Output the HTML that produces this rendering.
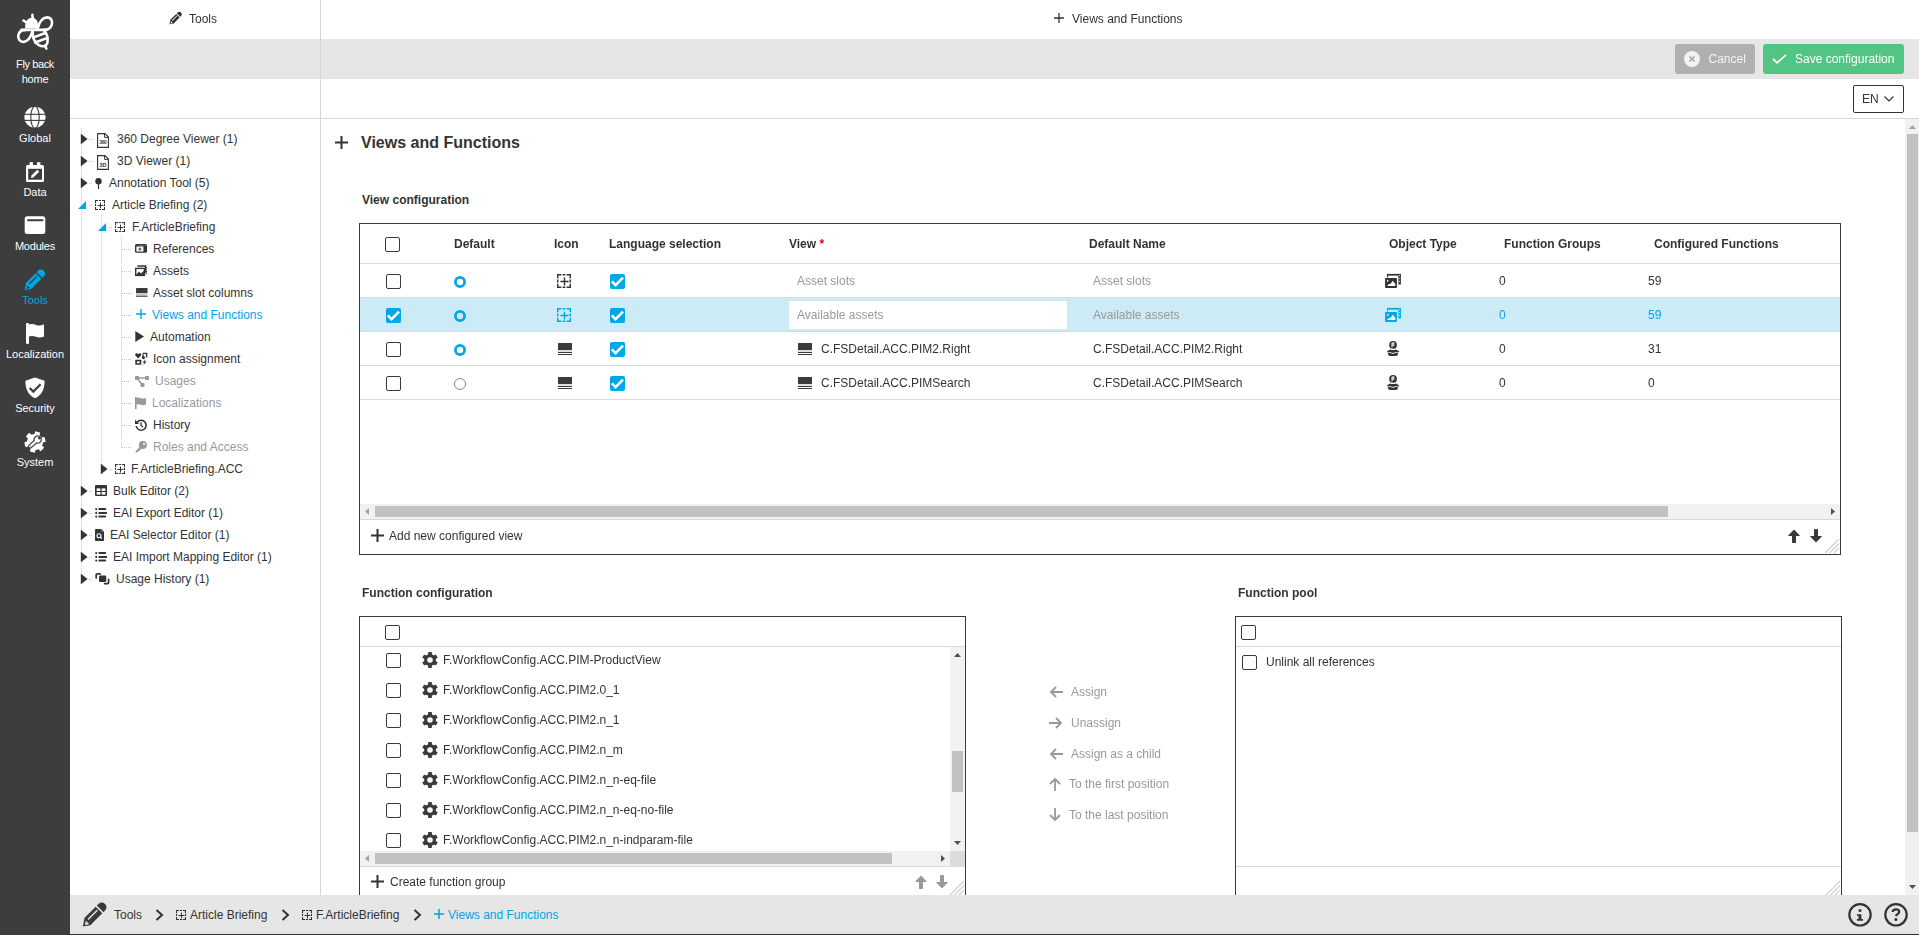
<!DOCTYPE html>
<html><head><meta charset="utf-8">
<style>
*{box-sizing:border-box;margin:0;padding:0}
html,body{width:1919px;height:935px;overflow:hidden;background:#fff;font-family:"Liberation Sans",sans-serif;font-size:12px;color:#333}
.a{position:absolute}
.t{position:absolute;white-space:nowrap;line-height:14px;font-size:12px}
svg{position:absolute;overflow:visible}
.si{position:absolute;left:0;width:70px;text-align:center;color:#fff;font-size:11px;line-height:14px;white-space:nowrap}
.blue{color:#00a5e3}
.gray{color:#999}
.cb{position:absolute;width:15px;height:15px;border:1.5px solid #3a3a3a;border-radius:2px;background:#fff}
.hd{position:absolute;font-weight:bold;white-space:nowrap;line-height:14px;font-size:12px}
.hl{position:absolute;height:1px;background:#d9d9d9}
.lay{position:absolute;left:0;top:0;width:1919px;height:935px;will-change:transform}
</style></head><body>
<div class="a" style="left:0;top:0;width:70px;height:935px;background:#3d3d3d"></div>
<svg style="left:10px;top:5px" width="50" height="50" viewBox="0 0 935 935">
 <g fill="none" stroke="#fff" stroke-width="48" stroke-linecap="round" stroke-linejoin="round">
  <line x1="250" y1="290" x2="305" y2="325"/>
  <line x1="418" y1="185" x2="425" y2="250"/>
  <path d="M215 465 L690 465"/>
  <path d="M515 450 C545 330 600 235 690 232 C775 232 800 310 780 370 C760 430 710 462 650 465"/>
  <path d="M425 480 C395 580 345 680 260 690 C180 698 148 630 155 570 C165 500 220 465 290 465"/>
  <path d="M425 485 C420 600 450 700 540 750 C610 790 690 770 700 700 C715 620 690 540 640 485"/>
  <line x1="430" y1="610" x2="660" y2="525"/>
  <line x1="470" y1="700" x2="690" y2="620"/>
  <line x1="660" y1="770" x2="680" y2="815"/>
 </g>
 <path d="M285 440 C270 320 330 240 410 238 C490 238 540 310 520 440 Z" fill="#fff"/>
</svg>
<div class="si" style="top:57px;letter-spacing:-0.4px">Fly back</div>
<div class="si" style="top:72px;letter-spacing:-0.2px">home</div>
<svg style="left:24px;top:106px" width="22" height="22" viewBox="0 0 22 22">
 <circle cx="11" cy="11.3" r="10.6" fill="#fff"/>
 <g fill="none" stroke="#3d3d3d" stroke-width="1.1">
  <line x1="0" y1="8.3" x2="22" y2="8.3"/><line x1="0" y1="14.4" x2="22" y2="14.4"/>
  <ellipse cx="11" cy="11.3" rx="4.2" ry="11"/>
 </g>
</svg>
<div class="si" style="top:131px">Global</div>
<svg style="left:26px;top:161px" width="18" height="21" viewBox="0 0 18 21">
 <rect x="0" y="4" width="18" height="17" rx="1.5" fill="#fff"/>
 <rect x="3.6" y="1.2" width="3.4" height="3.4" fill="#fff"/><rect x="11" y="1.2" width="3.4" height="3.4" fill="#fff"/>
 <rect x="2.2" y="7.8" width="13.8" height="10.9" fill="#3d3d3d"/>
 <path d="M5 17 L5.5 14.6 L11.3 8.8 L13.2 10.7 L7.4 16.5 Z" fill="#fff"/>
</svg>
<div class="si" style="top:185px">Data</div>
<svg style="left:24px;top:216px" width="22" height="19" viewBox="0 0 22 19">
 <rect x="0.7" y="0.3" width="20.6" height="17.7" rx="2.5" fill="#fff"/>
 <line x1="4" y1="4.3" x2="18.5" y2="4.3" stroke="#3d3d3d" stroke-width="2" stroke-linecap="round"/>
</svg>
<div class="si" style="top:239px;letter-spacing:-0.2px">Modules</div>
<svg style="left:23.6px;top:270px" width="20.5" height="20.5" viewBox="0 0 24 24"><g transform="translate(12 12) rotate(-45) scale(1.14)"><path d="M-14 0.2 L-7.6 -4.1 H6.2 V4.1 H-8.6 Z" fill="#00a5e3"/><path d="M7.6 -4.1 H9.6 A4.1 4.1 0 0 1 9.6 4.1 H7.6 Z" fill="#00a5e3"/><rect x="-6.5" y="-1.6" width="11.5" height="1.3" fill="#3d3d3d"/><path d="M-12 0.6 L-8.6 -1.4 L-8.6 2.6 Z" fill="#3d3d3d"/></g></svg>
<div class="si blue" style="top:293px">Tools</div>
<svg style="left:26px;top:323px" width="18" height="21" viewBox="0 0 18 21">
 <rect x="0" y="0" width="3" height="21" rx="1.2" fill="#fff"/>
 <path d="M2.5 1.5 C5 0.5 8 1 10 2 C12 3 15 2.5 18 1.3 L18 13.5 C15 14.7 12 14.8 10 13.8 C8 12.8 5 12.5 2.5 13.5 Z" fill="#fff"/>
</svg>
<div class="si" style="top:347px">Localization</div>
<svg style="left:25px;top:377px" width="20" height="22" viewBox="0 0 20 22">
 <path d="M10 0.5 L19.6 3.8 C19.6 12 17 18 10 21.3 C3 18 0.4 12 0.4 3.8 Z" fill="#fff"/>
 <path d="M4.6 11 L8.3 14.6 L15.6 7.3" fill="none" stroke="#3d3d3d" stroke-width="2.2"/>
</svg>
<div class="si" style="top:401px">Security</div>
<svg style="left:24px;top:431px" width="22" height="22" viewBox="0 0 22 22">
 <g transform="translate(11 11) rotate(15)" fill="#fff"><circle r="8"/><rect x="-2.6" y="-10.5" width="5.2" height="4" rx="0.9" transform="rotate(0)"/><rect x="-2.6" y="-10.5" width="5.2" height="4" rx="0.9" transform="rotate(60)"/><rect x="-2.6" y="-10.5" width="5.2" height="4" rx="0.9" transform="rotate(120)"/><rect x="-2.6" y="-10.5" width="5.2" height="4" rx="0.9" transform="rotate(180)"/><rect x="-2.6" y="-10.5" width="5.2" height="4" rx="0.9" transform="rotate(240)"/><rect x="-2.6" y="-10.5" width="5.2" height="4" rx="0.9" transform="rotate(300)"/></g>
 <g transform="translate(11 11) rotate(-42)">
  <g fill="none" stroke="#3d3d3d" stroke-width="2.4"><rect x="-7.6" y="-1.1" width="9.5" height="2.2" rx="1.1"/><circle cx="3.6" cy="0" r="2.9"/></g>
  <g fill="#fff"><rect x="-7.6" y="-1.1" width="9.5" height="2.2" rx="1.1"/><circle cx="3.6" cy="0" r="2.9"/></g>
  <rect x="4.6" y="-1.2" width="3" height="2.4" fill="#3d3d3d"/>
  <circle cx="-6" cy="0" r="0.5" fill="#3d3d3d"/>
 </g>
</svg>
<div class="si" style="top:455px">System</div>
<!-- ============ TREE ============ -->
<div class="a" style="left:81px;top:128px;width:1px;height:452px;background-image:linear-gradient(180deg,#cfcfcf 1px,transparent 1px);background-size:1px 2px"></div>
<div class="a" style="left:101px;top:215px;width:1px;height:255px;background-image:linear-gradient(180deg,#cfcfcf 1px,transparent 1px);background-size:1px 2px"></div>
<div class="a" style="left:121px;top:237px;width:1px;height:211px;background-image:linear-gradient(180deg,#cfcfcf 1px,transparent 1px);background-size:1px 2px"></div>
<svg style="left:81.2px;top:133.8px" width="7" height="10" viewBox="0 0 7 10"><path d="M0 0L6.3 5L0 10Z" fill="#333" stroke="#333" stroke-width="0.4" stroke-linejoin="round"/></svg>
<div class="a" style="left:89px;top:139px;width:4px;height:1px;background-image:linear-gradient(90deg,#c4c4c4 1px,transparent 1px);background-size:2px 1px"></div>
<svg style="left:97px;top:133px" width="12" height="15" viewBox="0 0 12 15"><path d="M0.6 0.6H8L11.4 4V14.4H0.6Z" fill="none" stroke="#333" stroke-width="1.1"/><path d="M7.6 0.6V4.4H11.4" fill="none" stroke="#333" stroke-width="1"/><text x="6" y="11.2" text-anchor="middle" font-size="4.6" font-weight="bold" font-family="Liberation Sans" fill="#333" letter-spacing="-0.3">360</text></svg>
<div class="t " style="left:117px;top:132px">360 Degree Viewer (1)</div>
<svg style="left:81.2px;top:155.8px" width="7" height="10" viewBox="0 0 7 10"><path d="M0 0L6.3 5L0 10Z" fill="#333" stroke="#333" stroke-width="0.4" stroke-linejoin="round"/></svg>
<div class="a" style="left:89px;top:161px;width:4px;height:1px;background-image:linear-gradient(90deg,#c4c4c4 1px,transparent 1px);background-size:2px 1px"></div>
<svg style="left:97px;top:155px" width="12" height="15" viewBox="0 0 12 15"><path d="M0.6 0.6H8L11.4 4V14.4H0.6Z" fill="none" stroke="#333" stroke-width="1.1"/><path d="M7.6 0.6V4.4H11.4" fill="none" stroke="#333" stroke-width="1"/><text x="6" y="12" text-anchor="middle" font-size="5.5" font-weight="bold" font-family="Liberation Sans" fill="#333">3D</text></svg>
<div class="t " style="left:117px;top:154px">3D Viewer (1)</div>
<svg style="left:81.2px;top:177.8px" width="7" height="10" viewBox="0 0 7 10"><path d="M0 0L6.3 5L0 10Z" fill="#333" stroke="#333" stroke-width="0.4" stroke-linejoin="round"/></svg>
<div class="a" style="left:89px;top:183px;width:4px;height:1px;background-image:linear-gradient(90deg,#c4c4c4 1px,transparent 1px);background-size:2px 1px"></div>
<svg style="left:95px;top:177.5px" width="7" height="12" viewBox="0 0 7 12"><circle cx="3.5" cy="3.2" r="3.2" fill="#333"/><rect x="2.9" y="5.5" width="1.2" height="5.5" fill="#333"/></svg>
<div class="t " style="left:109px;top:176px">Annotation Tool (5)</div>
<svg style="left:78px;top:201.0px" width="8" height="8" viewBox="0 0 8 8"><path d="M8 0L8 8L0 8Z" fill="#00a5e3"/></svg>
<div class="a" style="left:89px;top:205px;width:4px;height:1px;background-image:linear-gradient(90deg,#c4c4c4 1px,transparent 1px);background-size:2px 1px"></div>
<svg style="left:95px;top:200px" width="10" height="10" viewBox="0 0 10 10"><path d="M0.525 3.125V0.525H3.125M6.875 0.525H9.475V3.125M9.475 6.875V9.475H6.875M3.125 9.475H0.525V6.875M4.0 0.525H6.0M4.0 9.475H6.0M0.525 4.0V6.0M9.475 4.0V6.0" fill="none" stroke="#333" stroke-width="1.05"/><path d="M5.5 2.6V8.4M2.6 5.5H8.4" fill="none" stroke="#333" stroke-width="1.00"/></svg>
<div class="t " style="left:112px;top:198px">Article Briefing (2)</div>
<svg style="left:98px;top:223.0px" width="8" height="8" viewBox="0 0 8 8"><path d="M8 0L8 8L0 8Z" fill="#00a5e3"/></svg>
<div class="a" style="left:109px;top:227px;width:4px;height:1px;background-image:linear-gradient(90deg,#c4c4c4 1px,transparent 1px);background-size:2px 1px"></div>
<svg style="left:115px;top:222px" width="10" height="10" viewBox="0 0 10 10"><path d="M0.525 3.125V0.525H3.125M6.875 0.525H9.475V3.125M9.475 6.875V9.475H6.875M3.125 9.475H0.525V6.875M4.0 0.525H6.0M4.0 9.475H6.0M0.525 4.0V6.0M9.475 4.0V6.0" fill="none" stroke="#333" stroke-width="1.05"/><path d="M5.5 2.6V8.4M2.6 5.5H8.4" fill="none" stroke="#333" stroke-width="1.00"/></svg>
<div class="t " style="left:132px;top:220px">F.ArticleBriefing</div>
<div class="a" style="left:122px;top:249px;width:10px;height:1px;background-image:linear-gradient(90deg,#c4c4c4 1px,transparent 1px);background-size:2px 1px"></div>
<svg style="left:135px;top:244.2px" width="12" height="9" viewBox="0 0 12 9"><rect x="0" y="0" width="12" height="8.8" rx="1.6" fill="#333"/><rect x="1.4" y="2.4" width="7" height="5.2" rx="0.4" fill="#fff"/><path d="M4.9 3.6V6.6M3.4 5.1H6.4" stroke="#333" stroke-width="1"/><rect x="3.2" y="1.1" width="7.2" height="0.8" fill="#777"/></svg>
<div class="t " style="left:153px;top:242px">References</div>
<div class="a" style="left:122px;top:271px;width:10px;height:1px;background-image:linear-gradient(90deg,#c4c4c4 1px,transparent 1px);background-size:2px 1px"></div>
<svg style="left:135px;top:264.7px" width="12" height="11" viewBox="0 0 12 11"><rect x="0.7" y="3.4" width="8.8" height="7" fill="none" stroke="#333" stroke-width="1.4"/><path d="M1 10L4 6.6L6 8.4L9.5 5V10Z" fill="#333"/><path d="M2.4 1H10.6V8" fill="none" stroke="#333" stroke-width="1.4"/><path d="M11.5 2V9" stroke="#333" stroke-width="1" stroke-dasharray="1 1"/></svg>
<div class="t " style="left:153px;top:264px">Assets</div>
<div class="a" style="left:122px;top:293px;width:10px;height:1px;background-image:linear-gradient(90deg,#c4c4c4 1px,transparent 1px);background-size:2px 1px"></div>
<svg style="left:135.6px;top:288px" width="12" height="9" viewBox="0 0 12 9"><rect x="0" y="0" width="11.5" height="5.3" rx="0.4" fill="#3c3c3c"/><rect x="0" y="6.2" width="11.5" height="1.6" fill="#bdbdbd"/><rect x="0" y="7.8" width="11.5" height="1" fill="#444"/></svg>
<div class="t " style="left:153px;top:286px">Asset slot columns</div>
<div class="a" style="left:122px;top:315px;width:10px;height:1px;background-image:linear-gradient(90deg,#c4c4c4 1px,transparent 1px);background-size:2px 1px"></div>
<svg style="left:136px;top:309px" width="10" height="10" viewBox="0 0 10 10"><path d="M5 0V10M0 5H10" stroke="#00a5e3" stroke-width="1.4"/></svg>
<div class="t blue" style="left:152px;top:308px">Views and Functions</div>
<div class="a" style="left:122px;top:337px;width:10px;height:1px;background-image:linear-gradient(90deg,#c4c4c4 1px,transparent 1px);background-size:2px 1px"></div>
<svg style="left:135px;top:331px" width="9" height="11" viewBox="0 0 9 11"><path d="M0.3 0L9 5.5L0.3 11Z" fill="#333"/></svg>
<div class="t " style="left:150px;top:330px">Automation</div>
<div class="a" style="left:122px;top:359px;width:10px;height:1px;background-image:linear-gradient(90deg,#c4c4c4 1px,transparent 1px);background-size:2px 1px"></div>
<svg style="left:135px;top:352.5px" width="12" height="12" viewBox="0 0 12 12"><path d="M3.2 5.4L0.4 2.6C-0.3 1.5 0.5 0 1.8 0.3L3.2 1L4.6 0.3C5.9 0 6.7 1.5 6 2.6Z" fill="#333"/><path d="M8 0.4H11.6V4.6" fill="none" stroke="#333" stroke-width="1.4"/><circle cx="8.4" cy="4.6" r="1.6" fill="#333"/><path d="M8 0.4V4.4" stroke="#333" stroke-width="1.2"/><rect x="0.3" y="6.8" width="6" height="5" rx="0.5" fill="#333"/><rect x="1.9" y="8.4" width="2.8" height="1.9" fill="#fff"/><path d="M10.6 6.2L7.4 9.6H9.4L8.2 12.2L11.8 8.6H9.8Z" fill="#333"/></svg>
<div class="t " style="left:153px;top:352px">Icon assignment</div>
<div class="a" style="left:122px;top:381px;width:10px;height:1px;background-image:linear-gradient(90deg,#c4c4c4 1px,transparent 1px);background-size:2px 1px"></div>
<svg style="left:135px;top:375.5px" width="14" height="11" viewBox="0 0 14 11"><rect x="0" y="0" width="4" height="4" rx="0.8" fill="#999"/><rect x="10" y="0" width="4" height="4" rx="0.8" fill="#999"/><rect x="5.5" y="7" width="4" height="4" rx="0.8" fill="#999"/><path d="M2 2H12M2 2L7.5 9" stroke="#999" stroke-width="1.5"/></svg>
<div class="t gray" style="left:155px;top:374px">Usages</div>
<div class="a" style="left:122px;top:403px;width:10px;height:1px;background-image:linear-gradient(90deg,#c4c4c4 1px,transparent 1px);background-size:2px 1px"></div>
<svg style="left:135px;top:397px" width="11" height="12" viewBox="0 0 11 12"><rect x="0" y="0" width="1.6" height="12" fill="#999"/><path d="M1.2 0.8C3 0.2 4.5 0.6 6 1.2C7.5 1.8 9 1.6 11 1V7.6C9 8.2 7.5 8.4 6 7.8C4.5 7.2 3 7 1.2 7.6Z" fill="#999"/></svg>
<div class="t gray" style="left:152px;top:396px">Localizations</div>
<div class="a" style="left:122px;top:425px;width:10px;height:1px;background-image:linear-gradient(90deg,#c4c4c4 1px,transparent 1px);background-size:2px 1px"></div>
<svg style="left:135px;top:418.5px" width="12" height="12" viewBox="0 0 12 12"><path d="M2.2 3.2A5 5 0 1 1 1.2 7" fill="none" stroke="#333" stroke-width="1.6"/><path d="M0 0.8V5H4.2Z" fill="#333"/><path d="M6 3.2V6.4L8 8" fill="none" stroke="#333" stroke-width="1.3"/></svg>
<div class="t " style="left:153px;top:418px">History</div>
<div class="a" style="left:122px;top:447px;width:10px;height:1px;background-image:linear-gradient(90deg,#c4c4c4 1px,transparent 1px);background-size:2px 1px"></div>
<svg style="left:135px;top:441px" width="12" height="12" viewBox="0 0 12 12"><circle cx="7.9" cy="4.1" r="4" fill="#999"/><circle cx="9" cy="3" r="1.1" fill="#fff"/><path d="M5.2 5.6L0.6 10.2Q0.2 10.8 0.7 11.3Q1.2 11.8 1.8 11.4L2.8 10.4L3.6 10.6L4 9.6L4.9 9.4L6.4 6.9Z" fill="#999"/></svg>
<div class="t gray" style="left:153px;top:440px">Roles and Access</div>
<svg style="left:101.2px;top:463.8px" width="7" height="10" viewBox="0 0 7 10"><path d="M0 0L6.3 5L0 10Z" fill="#333" stroke="#333" stroke-width="0.4" stroke-linejoin="round"/></svg>
<div class="a" style="left:109px;top:469px;width:4px;height:1px;background-image:linear-gradient(90deg,#c4c4c4 1px,transparent 1px);background-size:2px 1px"></div>
<svg style="left:115px;top:464px" width="10" height="10" viewBox="0 0 10 10"><path d="M0.525 3.125V0.525H3.125M6.875 0.525H9.475V3.125M9.475 6.875V9.475H6.875M3.125 9.475H0.525V6.875M4.0 0.525H6.0M4.0 9.475H6.0M0.525 4.0V6.0M9.475 4.0V6.0" fill="none" stroke="#333" stroke-width="1.05"/><path d="M5.5 2.6V8.4M2.6 5.5H8.4" fill="none" stroke="#333" stroke-width="1.00"/></svg>
<div class="t " style="left:131px;top:462px">F.ArticleBriefing.ACC</div>
<svg style="left:81.2px;top:485.8px" width="7" height="10" viewBox="0 0 7 10"><path d="M0 0L6.3 5L0 10Z" fill="#333" stroke="#333" stroke-width="0.4" stroke-linejoin="round"/></svg>
<div class="a" style="left:89px;top:491px;width:4px;height:1px;background-image:linear-gradient(90deg,#c4c4c4 1px,transparent 1px);background-size:2px 1px"></div>
<svg style="left:95px;top:485px" width="12" height="11" viewBox="0 0 12 11"><rect x="0" y="0" width="12" height="11" rx="1.2" fill="#333"/><rect x="1.6" y="3.4" width="3.8" height="2.6" fill="#fff"/><rect x="6.6" y="3.4" width="3.8" height="2.6" fill="#fff"/><rect x="1.6" y="7" width="3.8" height="2.6" fill="#fff"/><rect x="6.6" y="7" width="3.8" height="2.6" fill="#fff"/></svg>
<div class="t " style="left:113px;top:484px">Bulk Editor (2)</div>
<svg style="left:81.2px;top:507.79999999999995px" width="7" height="10" viewBox="0 0 7 10"><path d="M0 0L6.3 5L0 10Z" fill="#333" stroke="#333" stroke-width="0.4" stroke-linejoin="round"/></svg>
<div class="a" style="left:89px;top:513px;width:4px;height:1px;background-image:linear-gradient(90deg,#c4c4c4 1px,transparent 1px);background-size:2px 1px"></div>
<svg style="left:95px;top:507.7px" width="12" height="10" viewBox="0 0 12 10"><g fill="#333"><circle cx="1.2" cy="1.1" r="1.05"/><circle cx="1.2" cy="4.9" r="1.05"/><circle cx="1.2" cy="8.6" r="1.05"/></g><g stroke="#333" stroke-width="2" stroke-linecap="round"><path d="M4.3 1.1H10.2M4.3 4.9H11.2M4.3 8.6H10.2"/></g></svg>
<div class="t " style="left:113px;top:506px">EAI Export Editor (1)</div>
<svg style="left:81.2px;top:529.8px" width="7" height="10" viewBox="0 0 7 10"><path d="M0 0L6.3 5L0 10Z" fill="#333" stroke="#333" stroke-width="0.4" stroke-linejoin="round"/></svg>
<div class="a" style="left:89px;top:535px;width:4px;height:1px;background-image:linear-gradient(90deg,#c4c4c4 1px,transparent 1px);background-size:2px 1px"></div>
<svg style="left:95px;top:528.7px" width="9" height="12" viewBox="0 0 9 12"><path d="M0.9 0H6.2L9 2.8V11.1Q9 12 8.1 12H0.9Q0 12 0 11.1V0.9Q0 0 0.9 0Z" fill="#333"/><path d="M6.3 0.2V2.7H8.8" fill="none" stroke="#777" stroke-width="0.7"/><circle cx="4" cy="6.7" r="2" fill="none" stroke="#fff" stroke-width="1.1"/><path d="M5.4 8.1L6.8 9.5" stroke="#fff" stroke-width="1.2"/></svg>
<div class="t " style="left:110px;top:528px">EAI Selector Editor (1)</div>
<svg style="left:81.2px;top:551.8px" width="7" height="10" viewBox="0 0 7 10"><path d="M0 0L6.3 5L0 10Z" fill="#333" stroke="#333" stroke-width="0.4" stroke-linejoin="round"/></svg>
<div class="a" style="left:89px;top:557px;width:4px;height:1px;background-image:linear-gradient(90deg,#c4c4c4 1px,transparent 1px);background-size:2px 1px"></div>
<svg style="left:95px;top:551.7px" width="12" height="10" viewBox="0 0 12 10"><g fill="#333"><circle cx="1.2" cy="1.1" r="1.05"/><circle cx="1.2" cy="4.9" r="1.05"/><circle cx="1.2" cy="8.6" r="1.05"/></g><g stroke="#333" stroke-width="2" stroke-linecap="round"><path d="M4.3 1.1H10.2M4.3 4.9H11.2M4.3 8.6H10.2"/></g></svg>
<div class="t " style="left:113px;top:550px">EAI Import Mapping Editor (1)</div>
<svg style="left:81.2px;top:573.8px" width="7" height="10" viewBox="0 0 7 10"><path d="M0 0L6.3 5L0 10Z" fill="#333" stroke="#333" stroke-width="0.4" stroke-linejoin="round"/></svg>
<div class="a" style="left:89px;top:579px;width:4px;height:1px;background-image:linear-gradient(90deg,#c4c4c4 1px,transparent 1px);background-size:2px 1px"></div>
<svg style="left:95px;top:572.7px" width="15" height="12" viewBox="0 0 15 12"><path d="M1.2 5V1.9Q1.2 0.9 2.2 0.9H5.2" fill="none" stroke="#333" stroke-width="1.7" stroke-linecap="round"/><rect x="4" y="2.4" width="7.3" height="6.6" rx="1.3" fill="#333"/><path d="M9.6 10.6H12.6Q13.6 10.6 13.6 9.6V6.4" fill="none" stroke="#333" stroke-width="1.7" stroke-linecap="round"/></svg>
<div class="t " style="left:116px;top:572px">Usage History (1)</div>
<!-- ============ MAIN ============ -->
<svg style="left:335px;top:136px" width="13" height="13" viewBox="0 0 13 13"><path d="M6.5 0V13M0 6.5H13" stroke="#333" stroke-width="2"/></svg>
<div class="hd" style="left:361px;top:133px;font-size:16px;line-height:20px">Views and Functions</div>
<div class="hd" style="left:362px;top:193px;">View configuration</div>
<div class="lay">
<div class="a" style="left:359px;top:223px;width:1482px;height:332px;border:1px solid #3a3a3a"></div>
<div class="cb" style="left:385px;top:237px"></div>
<div class="hd" style="left:454px;top:237px;">Default</div>
<div class="hd" style="left:554px;top:237px;">Icon</div>
<div class="hd" style="left:609px;top:237px;">Language selection</div>
<div class="hd" style="left:789px;top:237px;">View <span style="color:#e2001a">*</span></div>
<div class="hd" style="left:1089px;top:237px;">Default Name</div>
<div class="hd" style="left:1389px;top:237px;">Object Type</div>
<div class="hd" style="left:1504px;top:237px;">Function Groups</div>
<div class="hd" style="left:1654px;top:237px;">Configured Functions</div>
<div class="hl" style="left:360px;top:263px;width:1480px"></div>
<div class="a" style="left:360px;top:298px;width:1480px;height:33px;background:#cdeaf7"></div>
<div class="hl" style="left:360px;top:297px;width:1480px"></div>
<div class="hl" style="left:360px;top:331px;width:1480px"></div>
<div class="hl" style="left:360px;top:365px;width:1480px"></div>
<div class="hl" style="left:360px;top:399px;width:1480px"></div>
<div class="cb" style="left:386px;top:274px"></div>
<svg style="left:454px;top:275.5px" width="12" height="12" viewBox="0 0 12 12"><circle cx="6" cy="6" r="4.6" fill="none" stroke="#00a8e6" stroke-width="2.8"/></svg>
<svg style="left:557px;top:274px" width="14" height="14" viewBox="0 0 14 14"><path d="M0.725 4.365V0.725H4.365M9.635 0.725H13.275V4.365M13.275 9.635V13.275H9.635M4.365 13.275H0.725V9.635M5.6000000000000005 0.725H8.4M5.6000000000000005 13.275H8.4M0.725 5.6000000000000005V8.4M13.275 5.6000000000000005V8.4" fill="none" stroke="#333" stroke-width="1.45"/><path d="M7.5 3.4400000000000004V11.559999999999999M3.4400000000000004 7.5H11.559999999999999" fill="none" stroke="#333" stroke-width="1.38"/></svg>
<svg style="left:610px;top:274px" width="15" height="15" viewBox="0 0 15 15"><rect width="15" height="15" rx="2" fill="#00a8e6"/><path d="M1.8 7.4L5.6 11.2L13 3.6" fill="none" stroke="#fff" stroke-width="2.6"/></svg>
<div class="t gray" style="left:797px;top:274px;">Asset slots</div>
<div class="t gray" style="left:1093px;top:274px;">Asset slots</div>
<svg style="left:1384px;top:273px" width="17" height="15" viewBox="0 0 17 15"><rect x="3.1" y="0.9" width="13.8" height="1.7" fill="#333"/><rect x="3.1" y="0.9" width="1.1" height="3.6" fill="#333"/><rect x="14.4" y="0.9" width="2.5" height="10.6" rx="0.5" fill="#333"/><circle cx="15.6" cy="2.6" r="0.55" fill="#fff"/><circle cx="15.6" cy="5.5" r="0.55" fill="#fff"/><circle cx="15.6" cy="8.4" r="0.55" fill="#fff"/><rect x="1.1" y="5.1" width="11.8" height="9.8" rx="0.6" fill="#333"/><path d="M3 13.1L5.2 10.7L6.2 11.3L8.8 7.8L11.3 11V13.1Z" fill="#fff"/><rect x="3.1" y="6.9" width="1.2" height="1.9" fill="#fff"/></svg>
<div class="t " style="left:1499px;top:274px;">0</div>
<div class="t " style="left:1648px;top:274px;">59</div>
<svg style="left:386px;top:308px" width="15" height="15" viewBox="0 0 15 15"><rect width="15" height="15" rx="2" fill="#00a8e6"/><path d="M1.8 7.4L5.6 11.2L13 3.6" fill="none" stroke="#fff" stroke-width="2.6"/></svg>
<svg style="left:454px;top:309.5px" width="12" height="12" viewBox="0 0 12 12"><circle cx="6" cy="6" r="4.6" fill="none" stroke="#00a8e6" stroke-width="2.8"/></svg>
<svg style="left:557px;top:308px" width="14" height="14" viewBox="0 0 14 14"><path d="M0.725 4.365V0.725H4.365M9.635 0.725H13.275V4.365M13.275 9.635V13.275H9.635M4.365 13.275H0.725V9.635M5.6000000000000005 0.725H8.4M5.6000000000000005 13.275H8.4M0.725 5.6000000000000005V8.4M13.275 5.6000000000000005V8.4" fill="none" stroke="#00a8e6" stroke-width="1.45"/><path d="M7.5 3.4400000000000004V11.559999999999999M3.4400000000000004 7.5H11.559999999999999" fill="none" stroke="#00a8e6" stroke-width="1.38"/></svg>
<svg style="left:610px;top:308px" width="15" height="15" viewBox="0 0 15 15"><rect width="15" height="15" rx="2" fill="#00a8e6"/><path d="M1.8 7.4L5.6 11.2L13 3.6" fill="none" stroke="#fff" stroke-width="2.6"/></svg>
<div class="a" style="left:789px;top:301px;width:278px;height:28px;background:#fff;border-radius:2px"></div>
<div class="t gray" style="left:797px;top:308px;">Available assets</div>
<div class="t gray" style="left:1093px;top:308px;">Available assets</div>
<svg style="left:1384px;top:307px" width="17" height="15" viewBox="0 0 17 15"><rect x="3.1" y="0.9" width="13.8" height="1.7" fill="#00a8e6"/><rect x="3.1" y="0.9" width="1.1" height="3.6" fill="#00a8e6"/><rect x="14.4" y="0.9" width="2.5" height="10.6" rx="0.5" fill="#00a8e6"/><circle cx="15.6" cy="2.6" r="0.55" fill="#fff"/><circle cx="15.6" cy="5.5" r="0.55" fill="#fff"/><circle cx="15.6" cy="8.4" r="0.55" fill="#fff"/><rect x="1.1" y="5.1" width="11.8" height="9.8" rx="0.6" fill="#00a8e6"/><path d="M3 13.1L5.2 10.7L6.2 11.3L8.8 7.8L11.3 11V13.1Z" fill="#fff"/><rect x="3.1" y="6.9" width="1.2" height="1.9" fill="#fff"/></svg>
<div class="t blue" style="left:1499px;top:308px;">0</div>
<div class="t blue" style="left:1648px;top:308px;">59</div>
<div class="cb" style="left:386px;top:342px"></div>
<svg style="left:454px;top:343.5px" width="12" height="12" viewBox="0 0 12 12"><circle cx="6" cy="6" r="4.6" fill="none" stroke="#00a8e6" stroke-width="2.8"/></svg>
<svg style="left:558px;top:343px" width="14" height="12" viewBox="0 0 14 12"><rect x="0" y="0" width="14" height="7" rx="0.3" fill="#3c3c3c"/><rect x="0" y="7" width="14" height="1.8" fill="#dcdcdc"/><rect x="0" y="9" width="14" height="1" fill="#3c3c3c"/><rect x="0" y="11" width="14" height="1" fill="#3c3c3c"/></svg>
<svg style="left:610px;top:342px" width="15" height="15" viewBox="0 0 15 15"><rect width="15" height="15" rx="2" fill="#00a8e6"/><path d="M1.8 7.4L5.6 11.2L13 3.6" fill="none" stroke="#fff" stroke-width="2.6"/></svg>
<svg style="left:797.6px;top:343px" width="14" height="12" viewBox="0 0 14 12"><rect x="0" y="0" width="14" height="7" rx="0.3" fill="#3c3c3c"/><rect x="0" y="7" width="14" height="1.8" fill="#dcdcdc"/><rect x="0" y="9" width="14" height="1" fill="#3c3c3c"/><rect x="0" y="11" width="14" height="1" fill="#3c3c3c"/></svg>
<div class="t " style="left:821px;top:342px;">C.FSDetail.ACC.PIM2.Right</div>
<div class="t " style="left:1093px;top:342px;">C.FSDetail.ACC.PIM2.Right</div>
<svg style="left:1386px;top:341px" width="14" height="16" viewBox="0 0 14 16"><circle cx="7.05" cy="3.95" r="3.85" fill="#333"/><path d="M6 1.8V6.4M6 2H8.2L7.4 3.1L8.2 4.2H6" fill="none" stroke="#fff" stroke-width="1"/><path d="M1 10.2L4.2 8.4Q7 9.4 9.8 8.4L13.2 10.2L12.4 11.4Q9.5 10.6 8 12Q7 11.2 6 12Q4.5 10.6 1.6 11.4Z" fill="#333"/><path d="M2 11.8Q4.5 11.4 6 12.8Q7 12.2 8 12.8Q9.5 11.4 12 11.8L11.6 14.4Q7 15.6 2.4 14.4Z" fill="#333"/></svg>
<div class="t " style="left:1499px;top:342px;">0</div>
<div class="t " style="left:1648px;top:342px;">31</div>
<div class="cb" style="left:386px;top:376px"></div>
<svg style="left:454px;top:377.5px" width="12" height="12" viewBox="0 0 12 12"><circle cx="6" cy="6" r="5.5" fill="none" stroke="#777" stroke-width="0.9"/></svg>
<svg style="left:558px;top:377px" width="14" height="12" viewBox="0 0 14 12"><rect x="0" y="0" width="14" height="7" rx="0.3" fill="#3c3c3c"/><rect x="0" y="7" width="14" height="1.8" fill="#dcdcdc"/><rect x="0" y="9" width="14" height="1" fill="#3c3c3c"/><rect x="0" y="11" width="14" height="1" fill="#3c3c3c"/></svg>
<svg style="left:610px;top:376px" width="15" height="15" viewBox="0 0 15 15"><rect width="15" height="15" rx="2" fill="#00a8e6"/><path d="M1.8 7.4L5.6 11.2L13 3.6" fill="none" stroke="#fff" stroke-width="2.6"/></svg>
<svg style="left:797.6px;top:377px" width="14" height="12" viewBox="0 0 14 12"><rect x="0" y="0" width="14" height="7" rx="0.3" fill="#3c3c3c"/><rect x="0" y="7" width="14" height="1.8" fill="#dcdcdc"/><rect x="0" y="9" width="14" height="1" fill="#3c3c3c"/><rect x="0" y="11" width="14" height="1" fill="#3c3c3c"/></svg>
<div class="t " style="left:821px;top:376px;">C.FSDetail.ACC.PIMSearch</div>
<div class="t " style="left:1093px;top:376px;">C.FSDetail.ACC.PIMSearch</div>
<svg style="left:1386px;top:375px" width="14" height="16" viewBox="0 0 14 16"><circle cx="7.05" cy="3.95" r="3.85" fill="#333"/><path d="M6 1.8V6.4M6 2H8.2L7.4 3.1L8.2 4.2H6" fill="none" stroke="#fff" stroke-width="1"/><path d="M1 10.2L4.2 8.4Q7 9.4 9.8 8.4L13.2 10.2L12.4 11.4Q9.5 10.6 8 12Q7 11.2 6 12Q4.5 10.6 1.6 11.4Z" fill="#333"/><path d="M2 11.8Q4.5 11.4 6 12.8Q7 12.2 8 12.8Q9.5 11.4 12 11.8L11.6 14.4Q7 15.6 2.4 14.4Z" fill="#333"/></svg>
<div class="t " style="left:1499px;top:376px;">0</div>
<div class="t " style="left:1648px;top:376px;">0</div>
<div class="a" style="left:360px;top:504px;width:1480px;height:15px;background:#f1f1f1"></div>
<div class="a" style="left:375px;top:506px;width:1293px;height:11px;background:#c1c1c1"></div>
<svg style="left:365px;top:508px" width="4" height="7" viewBox="0 0 4 7"><path d="M4 0L0 3.5L4 7Z" fill="#a3a3a3"/></svg>
<svg style="left:1831px;top:508px" width="4" height="7" viewBox="0 0 4 7"><path d="M0 0L4 3.5L0 7Z" fill="#505050"/></svg>
<div class="hl" style="left:360px;top:519px;width:1480px"></div>
<svg style="left:371px;top:529px" width="13" height="13" viewBox="0 0 13 13"><path d="M6.5 0V13M0 6.5H13" stroke="#333" stroke-width="2"/></svg>
<div class="t " style="left:389px;top:529px;">Add new configured view</div>
<svg style="left:1788px;top:529px" width="12" height="14" viewBox="0 0 12 14"><path d="M6 0.5L11.6 6.2C11.9 6.6 11.7 7 11.2 7H8V13C8 13.6 7.6 14 7 14H5C4.4 14 4 13.6 4 13V7H0.8C0.3 7 0.1 6.6 0.4 6.2Z" fill="#3a3a3a"/></svg>
<svg style="left:1810px;top:529px" width="12" height="14" viewBox="0 0 12 14"><path d="M6 13.5L11.6 7.8C11.9 7.4 11.7 7 11.2 7H8V1C8 0.4 7.6 0 7 0H5C4.4 0 4 0.4 4 1V7H0.8C0.3 7 0.1 7.4 0.4 7.8Z" fill="#3a3a3a"/></svg>
<svg style="left:1825px;top:539px" width="14" height="14" viewBox="0 0 14 14"><path d="M14 0L0 14M14 4.5L4.5 14M14 9L9 14" stroke="#d2d2d2" stroke-width="1.3"/></svg>
</div>
<div class="hd" style="left:362px;top:586px;">Function configuration</div>
<div class="lay">
<div class="a" style="left:359px;top:616px;width:607px;height:300px;border:1px solid #3a3a3a"></div>
<div class="cb" style="left:385px;top:625px"></div>
<div class="hl" style="left:360px;top:646px;width:605px"></div>
<div class="cb" style="left:386px;top:653px"></div>
<svg style="left:422px;top:652px" width="16" height="16" viewBox="0 0 16 16"><g transform="translate(8 8)" fill="#3a3a3a"><rect x="-1.9" y="-7.9" width="3.8" height="4" rx="0.6" transform="rotate(0)"/><rect x="-1.9" y="-7.9" width="3.8" height="4" rx="0.6" transform="rotate(60)"/><rect x="-1.9" y="-7.9" width="3.8" height="4" rx="0.6" transform="rotate(120)"/><rect x="-1.9" y="-7.9" width="3.8" height="4" rx="0.6" transform="rotate(180)"/><rect x="-1.9" y="-7.9" width="3.8" height="4" rx="0.6" transform="rotate(240)"/><rect x="-1.9" y="-7.9" width="3.8" height="4" rx="0.6" transform="rotate(300)"/><circle r="5.9"/></g><circle cx="8" cy="8" r="2.8" fill="#fff"/></svg>
<div class="t " style="left:443px;top:653px;">F.WorkflowConfig.ACC.PIM-ProductView</div>
<div class="cb" style="left:386px;top:683px"></div>
<svg style="left:422px;top:682px" width="16" height="16" viewBox="0 0 16 16"><g transform="translate(8 8)" fill="#3a3a3a"><rect x="-1.9" y="-7.9" width="3.8" height="4" rx="0.6" transform="rotate(0)"/><rect x="-1.9" y="-7.9" width="3.8" height="4" rx="0.6" transform="rotate(60)"/><rect x="-1.9" y="-7.9" width="3.8" height="4" rx="0.6" transform="rotate(120)"/><rect x="-1.9" y="-7.9" width="3.8" height="4" rx="0.6" transform="rotate(180)"/><rect x="-1.9" y="-7.9" width="3.8" height="4" rx="0.6" transform="rotate(240)"/><rect x="-1.9" y="-7.9" width="3.8" height="4" rx="0.6" transform="rotate(300)"/><circle r="5.9"/></g><circle cx="8" cy="8" r="2.8" fill="#fff"/></svg>
<div class="t " style="left:443px;top:683px;">F.WorkflowConfig.ACC.PIM2.0_1</div>
<div class="cb" style="left:386px;top:713px"></div>
<svg style="left:422px;top:712px" width="16" height="16" viewBox="0 0 16 16"><g transform="translate(8 8)" fill="#3a3a3a"><rect x="-1.9" y="-7.9" width="3.8" height="4" rx="0.6" transform="rotate(0)"/><rect x="-1.9" y="-7.9" width="3.8" height="4" rx="0.6" transform="rotate(60)"/><rect x="-1.9" y="-7.9" width="3.8" height="4" rx="0.6" transform="rotate(120)"/><rect x="-1.9" y="-7.9" width="3.8" height="4" rx="0.6" transform="rotate(180)"/><rect x="-1.9" y="-7.9" width="3.8" height="4" rx="0.6" transform="rotate(240)"/><rect x="-1.9" y="-7.9" width="3.8" height="4" rx="0.6" transform="rotate(300)"/><circle r="5.9"/></g><circle cx="8" cy="8" r="2.8" fill="#fff"/></svg>
<div class="t " style="left:443px;top:713px;">F.WorkflowConfig.ACC.PIM2.n_1</div>
<div class="cb" style="left:386px;top:743px"></div>
<svg style="left:422px;top:742px" width="16" height="16" viewBox="0 0 16 16"><g transform="translate(8 8)" fill="#3a3a3a"><rect x="-1.9" y="-7.9" width="3.8" height="4" rx="0.6" transform="rotate(0)"/><rect x="-1.9" y="-7.9" width="3.8" height="4" rx="0.6" transform="rotate(60)"/><rect x="-1.9" y="-7.9" width="3.8" height="4" rx="0.6" transform="rotate(120)"/><rect x="-1.9" y="-7.9" width="3.8" height="4" rx="0.6" transform="rotate(180)"/><rect x="-1.9" y="-7.9" width="3.8" height="4" rx="0.6" transform="rotate(240)"/><rect x="-1.9" y="-7.9" width="3.8" height="4" rx="0.6" transform="rotate(300)"/><circle r="5.9"/></g><circle cx="8" cy="8" r="2.8" fill="#fff"/></svg>
<div class="t " style="left:443px;top:743px;">F.WorkflowConfig.ACC.PIM2.n_m</div>
<div class="cb" style="left:386px;top:773px"></div>
<svg style="left:422px;top:772px" width="16" height="16" viewBox="0 0 16 16"><g transform="translate(8 8)" fill="#3a3a3a"><rect x="-1.9" y="-7.9" width="3.8" height="4" rx="0.6" transform="rotate(0)"/><rect x="-1.9" y="-7.9" width="3.8" height="4" rx="0.6" transform="rotate(60)"/><rect x="-1.9" y="-7.9" width="3.8" height="4" rx="0.6" transform="rotate(120)"/><rect x="-1.9" y="-7.9" width="3.8" height="4" rx="0.6" transform="rotate(180)"/><rect x="-1.9" y="-7.9" width="3.8" height="4" rx="0.6" transform="rotate(240)"/><rect x="-1.9" y="-7.9" width="3.8" height="4" rx="0.6" transform="rotate(300)"/><circle r="5.9"/></g><circle cx="8" cy="8" r="2.8" fill="#fff"/></svg>
<div class="t " style="left:443px;top:773px;">F.WorkflowConfig.ACC.PIM2.n_n-eq-file</div>
<div class="cb" style="left:386px;top:803px"></div>
<svg style="left:422px;top:802px" width="16" height="16" viewBox="0 0 16 16"><g transform="translate(8 8)" fill="#3a3a3a"><rect x="-1.9" y="-7.9" width="3.8" height="4" rx="0.6" transform="rotate(0)"/><rect x="-1.9" y="-7.9" width="3.8" height="4" rx="0.6" transform="rotate(60)"/><rect x="-1.9" y="-7.9" width="3.8" height="4" rx="0.6" transform="rotate(120)"/><rect x="-1.9" y="-7.9" width="3.8" height="4" rx="0.6" transform="rotate(180)"/><rect x="-1.9" y="-7.9" width="3.8" height="4" rx="0.6" transform="rotate(240)"/><rect x="-1.9" y="-7.9" width="3.8" height="4" rx="0.6" transform="rotate(300)"/><circle r="5.9"/></g><circle cx="8" cy="8" r="2.8" fill="#fff"/></svg>
<div class="t " style="left:443px;top:803px;">F.WorkflowConfig.ACC.PIM2.n_n-eq-no-file</div>
<div class="cb" style="left:386px;top:833px"></div>
<svg style="left:422px;top:832px" width="16" height="16" viewBox="0 0 16 16"><g transform="translate(8 8)" fill="#3a3a3a"><rect x="-1.9" y="-7.9" width="3.8" height="4" rx="0.6" transform="rotate(0)"/><rect x="-1.9" y="-7.9" width="3.8" height="4" rx="0.6" transform="rotate(60)"/><rect x="-1.9" y="-7.9" width="3.8" height="4" rx="0.6" transform="rotate(120)"/><rect x="-1.9" y="-7.9" width="3.8" height="4" rx="0.6" transform="rotate(180)"/><rect x="-1.9" y="-7.9" width="3.8" height="4" rx="0.6" transform="rotate(240)"/><rect x="-1.9" y="-7.9" width="3.8" height="4" rx="0.6" transform="rotate(300)"/><circle r="5.9"/></g><circle cx="8" cy="8" r="2.8" fill="#fff"/></svg>
<div class="t " style="left:443px;top:833px;">F.WorkflowConfig.ACC.PIM2.n_n-indparam-file</div>
<div class="a" style="left:950px;top:647px;width:15px;height:204px;background:#f1f1f1"></div>
<div class="a" style="left:952px;top:751px;width:11px;height:41px;background:#c1c1c1"></div>
<svg style="left:954px;top:653px" width="7" height="4" viewBox="0 0 7 4"><path d="M0 4L3.5 0L7 4Z" fill="#505050"/></svg>
<svg style="left:954px;top:841px" width="7" height="4" viewBox="0 0 7 4"><path d="M0 0L3.5 4L7 0Z" fill="#505050"/></svg>
<div class="a" style="left:360px;top:851px;width:590px;height:15px;background:#f1f1f1"></div>
<div class="a" style="left:950px;top:851px;width:15px;height:15px;background:#dcdcdc"></div>
<div class="a" style="left:375px;top:853px;width:517px;height:11px;background:#c1c1c1"></div>
<svg style="left:365px;top:855px" width="4" height="7" viewBox="0 0 4 7"><path d="M4 0L0 3.5L4 7Z" fill="#a3a3a3"/></svg>
<svg style="left:941px;top:855px" width="4" height="7" viewBox="0 0 4 7"><path d="M0 0L4 3.5L0 7Z" fill="#505050"/></svg>
<div class="hl" style="left:360px;top:866px;width:605px"></div>
<svg style="left:371px;top:875px" width="13" height="13" viewBox="0 0 13 13"><path d="M6.5 0V13M0 6.5H13" stroke="#333" stroke-width="2"/></svg>
<div class="t " style="left:390px;top:875px;">Create function group</div>
<svg style="left:915px;top:875px" width="12" height="14" viewBox="0 0 12 14"><path d="M6 0.5L11.6 6.2C11.9 6.6 11.7 7 11.2 7H8V13C8 13.6 7.6 14 7 14H5C4.4 14 4 13.6 4 13V7H0.8C0.3 7 0.1 6.6 0.4 6.2Z" fill="#999"/></svg>
<svg style="left:936px;top:875px" width="12" height="14" viewBox="0 0 12 14"><path d="M6 13.5L11.6 7.8C11.9 7.4 11.7 7 11.2 7H8V1C8 0.4 7.6 0 7 0H5C4.4 0 4 0.4 4 1V7H0.8C0.3 7 0.1 7.4 0.4 7.8Z" fill="#999"/></svg>
<svg style="left:950px;top:881px" width="14" height="14" viewBox="0 0 14 14"><path d="M14 0L0 14M14 4.5L4.5 14M14 9L9 14" stroke="#d2d2d2" stroke-width="1.3"/></svg>
</div>
<svg style="left:1049px;top:686px" width="14" height="14" viewBox="0 0 14 14"><path d="M14 6H2M7 1L2 6L7 11" fill="none" stroke="#999" stroke-width="1.8"/></svg>
<div class="t gray" style="left:1071px;top:685px;">Assign</div>
<svg style="left:1049px;top:717px" width="14" height="14" viewBox="0 0 14 14"><path d="M0 6H12M7 1L12 6L7 11" fill="none" stroke="#999" stroke-width="1.8"/></svg>
<div class="t gray" style="left:1071px;top:716px;">Unassign</div>
<svg style="left:1049px;top:748px" width="14" height="14" viewBox="0 0 14 14"><path d="M14 6H2M7 1L2 6L7 11" fill="none" stroke="#999" stroke-width="1.8"/></svg>
<div class="t gray" style="left:1071px;top:747px;">Assign as a child</div>
<svg style="left:1049px;top:777px" width="14" height="14" viewBox="0 0 14 14"><path d="M6 14V2M1 7L6 2L11 7" fill="none" stroke="#999" stroke-width="1.8"/></svg>
<div class="t gray" style="left:1069px;top:777px;">To the first position</div>
<svg style="left:1049px;top:808px" width="14" height="14" viewBox="0 0 14 14"><path d="M6 0V12M1 7L6 12L11 7" fill="none" stroke="#999" stroke-width="1.8"/></svg>
<div class="t gray" style="left:1069px;top:808px;">To the last position</div>
<div class="hd" style="left:1238px;top:586px;">Function pool</div>
<div class="lay">
<div class="a" style="left:1235px;top:616px;width:607px;height:300px;border:1px solid #3a3a3a"></div>
<div class="cb" style="left:1241px;top:625px"></div>
<div class="hl" style="left:1236px;top:646px;width:605px"></div>
<div class="cb" style="left:1242px;top:655px"></div>
<div class="t " style="left:1266px;top:655px;">Unlink all references</div>
<div class="hl" style="left:1236px;top:866px;width:605px"></div>
<svg style="left:1826px;top:881px" width="14" height="14" viewBox="0 0 14 14"><path d="M14 0L0 14M14 4.5L4.5 14M14 9L9 14" stroke="#d2d2d2" stroke-width="1.3"/></svg>
</div>
<!-- ============ HEADER ============ -->
<div class="a" style="left:70px;top:39px;width:1849px;height:40px;background:#e6e6e6"></div>
<div class="hl" style="left:70px;top:118px;width:1849px;background:#d6d6d6"></div>
<div class="a" style="left:320px;top:0;width:1px;height:895px;background:#d6d6d6"></div>
<svg style="left:168.7px;top:12.2px" width="12.6" height="12.6" viewBox="0 0 24 24"><g transform="translate(12 12) rotate(-45) scale(1.14)"><path d="M-14 0.2 L-7.6 -4.1 H6.2 V4.1 H-8.6 Z" fill="#333"/><path d="M7.6 -4.1 H9.6 A4.1 4.1 0 0 1 9.6 4.1 H7.6 Z" fill="#333"/><rect x="-6.5" y="-1.6" width="11.5" height="1.3" fill="#fff"/><path d="M-12 0.6 L-8.6 -1.4 L-8.6 2.6 Z" fill="#fff"/></g></svg>
<div class="t" style="left:189px;top:12px">Tools</div>
<svg style="left:1054px;top:13px" width="10" height="10" viewBox="0 0 10 10"><path d="M5 0V10M0 5H10" stroke="#333" stroke-width="1.3"/></svg>
<div class="t" style="left:1072px;top:12px">Views and Functions</div>
<div class="lay">
<div class="a" style="left:1675px;top:44px;width:80px;height:30px;background:#b0b0b0;border-radius:3px"></div>
<svg style="left:1684px;top:51px" width="16" height="16" viewBox="0 0 16 16"><circle cx="8" cy="8" r="8" fill="#f2f2f2"/><path d="M5.5 5.5L10.5 10.5M10.5 5.5L5.5 10.5" stroke="#a8a8a8" stroke-width="1.6"/></svg>
<div class="t" style="left:1708.5px;top:52px;color:#f4f4f4">Cancel</div>
<div class="a" style="left:1763px;top:44px;width:141px;height:30px;background:#52c483;border-radius:3px"></div>
<svg style="left:1772px;top:54px" width="15" height="10" viewBox="0 0 15 10"><path d="M1 4.8L5 8.8L14 0.8" fill="none" stroke="#fff" stroke-width="1.8"/></svg>
<div class="t" style="left:1795px;top:52px;color:#fff">Save configuration</div>
</div>
<div class="a" style="left:1853px;top:85px;width:51px;height:28px;border:1px solid #333;border-radius:2px"></div>
<div class="t" style="left:1862px;top:92px">EN</div>
<svg style="left:1884px;top:96px" width="10" height="6" viewBox="0 0 10 6"><path d="M0.5 0.5L5 5L9.5 0.5" fill="none" stroke="#333" stroke-width="1.2"/></svg>
<!-- ============ BOTTOM BAR ============ -->
<div class="a" style="left:70px;top:895px;width:1849px;height:40px;background:#e6e6e6"></div>
<div class="a" style="left:70px;top:934px;width:1849px;height:1px;background:#333"></div>
<svg style="left:82px;top:903px" width="24" height="24" viewBox="0 0 24 24"><g transform="translate(12 12) rotate(-45) scale(1.14)"><path d="M-14 0.2 L-7.6 -4.1 H6.2 V4.1 H-8.6 Z" fill="#3a3a3a"/><path d="M7.6 -4.1 H9.6 A4.1 4.1 0 0 1 9.6 4.1 H7.6 Z" fill="#3a3a3a"/><rect x="-6.5" y="-1.6" width="11.5" height="1.3" fill="#e6e6e6"/><path d="M-12 0.6 L-8.6 -1.4 L-8.6 2.6 Z" fill="#e6e6e6"/></g></svg>
<div class="t" style="left:114px;top:908px">Tools</div>
<svg style="left:155px;top:909px" width="9" height="12" viewBox="0 0 9 12"><path d="M1.5 1L7 6L1.5 11" fill="none" stroke="#333" stroke-width="2"/></svg>
<svg style="left:176px;top:910px" width="10" height="10" viewBox="0 0 10 10"><path d="M0.525 3.125V0.525H3.125M6.875 0.525H9.475V3.125M9.475 6.875V9.475H6.875M3.125 9.475H0.525V6.875M4.0 0.525H6.0M4.0 9.475H6.0M0.525 4.0V6.0M9.475 4.0V6.0" fill="none" stroke="#333" stroke-width="1.05"/><path d="M5.5 2.6V8.4M2.6 5.5H8.4" fill="none" stroke="#333" stroke-width="1.00"/></svg>
<div class="t" style="left:190px;top:908px">Article Briefing</div>
<svg style="left:281px;top:909px" width="9" height="12" viewBox="0 0 9 12"><path d="M1.5 1L7 6L1.5 11" fill="none" stroke="#333" stroke-width="2"/></svg>
<svg style="left:302px;top:910px" width="10" height="10" viewBox="0 0 10 10"><path d="M0.525 3.125V0.525H3.125M6.875 0.525H9.475V3.125M9.475 6.875V9.475H6.875M3.125 9.475H0.525V6.875M4.0 0.525H6.0M4.0 9.475H6.0M0.525 4.0V6.0M9.475 4.0V6.0" fill="none" stroke="#333" stroke-width="1.05"/><path d="M5.5 2.6V8.4M2.6 5.5H8.4" fill="none" stroke="#333" stroke-width="1.00"/></svg>
<div class="t" style="left:316px;top:908px">F.ArticleBriefing</div>
<svg style="left:413px;top:909px" width="9" height="12" viewBox="0 0 9 12"><path d="M1.5 1L7 6L1.5 11" fill="none" stroke="#333" stroke-width="2"/></svg>
<svg style="left:434px;top:909px" width="10" height="10" viewBox="0 0 10 10"><path d="M5 0V10M0 5H10" stroke="#00a5e3" stroke-width="1.5"/></svg>
<div class="t blue" style="left:448px;top:908px">Views and Functions</div>
<svg style="left:1848px;top:903px" width="24" height="24" viewBox="0 0 24 24"><circle cx="12" cy="11.8" r="10.7" fill="none" stroke="#333" stroke-width="2.2"/><circle cx="12" cy="7.4" r="1.5" fill="#333"/><path d="M8.9 11.3H13.4V16H15V17.8H8.9V16H10.5V12.8H8.9Z" fill="#333"/></svg>
<svg style="left:1884px;top:903px" width="24" height="24" viewBox="0 0 24 24"><circle cx="12" cy="11.8" r="10.7" fill="none" stroke="#333" stroke-width="2.2"/><path d="M8.6 9C8.8 7.2 10.3 6.4 12 6.4C13.8 6.4 15.2 7.4 15.2 8.9C15.2 10.5 13.6 10.9 12.5 11.9L12.1 13.3" fill="none" stroke="#333" stroke-width="2.2"/><circle cx="11.9" cy="16.5" r="1.5" fill="#333"/></svg>
<!-- ============ MAIN SCROLLBAR ============ -->
<div class="a" style="left:1905px;top:119px;width:14px;height:776px;background:#f1f1f1"></div>
<div class="a" style="left:1907px;top:134px;width:11px;height:698px;background:#c1c1c1"></div>
<svg style="left:1909px;top:125px" width="7" height="4" viewBox="0 0 7 4"><path d="M0 4L3.5 0L7 4Z" fill="#a3a3a3"/></svg>
<svg style="left:1909px;top:885px" width="7" height="4" viewBox="0 0 7 4"><path d="M0 0L3.5 4L7 0Z" fill="#505050"/></svg>
</body></html>
